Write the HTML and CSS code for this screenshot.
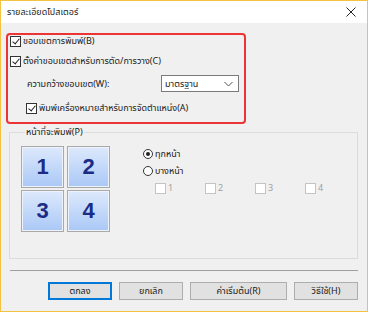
FILE: index.html
```html
<!DOCTYPE html>
<html lang="th">
<head>
  <meta charset="UTF-8">
  <title>รายละเอียดโปสเตอร์</title>
  <link rel="stylesheet" href="styles.css">
</head>
<body>

<div class="dialog">
  <!-- แถบชื่อหน้าต่าง -->
  <div class="titlebar">
    <span class="title">รายละเอียดโปสเตอร์</span>
    <svg class="close" width="10" height="10" viewBox="0 0 10 10">
      <path d="M0.5 0.5 L9.5 9.5 M9.5 0.5 L0.5 9.5" stroke="#222" stroke-width="1"/>
    </svg>
  </div>

  <div class="dialog-body">
    <!-- กรอบตัวเลือกขอบเขต -->
    <div class="highlight">
      <div class="opt row-margin">
        <span class="cb checked"></span>
        <span>ขอบเขตการพิมพ์(B)</span>
      </div>
      <div class="opt row-cut">
        <span class="cb checked"></span>
        <span>ตั้งค่าขอบเขตสำหรับการตัด/การวาง(C)</span>
      </div>
      <div class="opt row-width">
        <span class="width-label">ความกว้างขอบเขต(W):</span>
        <div class="select">
          <span>มาตรฐาน</span>
          <svg width="9" height="6" viewBox="0 0 9 6">
            <path d="M0.5 1 L4.5 5 L8.5 1" fill="none" stroke="#555" stroke-width="1"/>
          </svg>
        </div>
      </div>
      <div class="opt row-marks">
        <span class="cb checked"></span>
        <span>พิมพ์เครื่องหมายสำหรับการจัดตำแหน่ง(A)</span>
      </div>
    </div>

    <!-- หน้าที่จะพิมพ์ -->
    <fieldset class="group">
      <legend>หน้าที่จะพิมพ์(P)</legend>
      <div class="group-inner">
        <div class="tiles">
          <div class="tile">1</div>
          <div class="tile">2</div>
          <div class="tile">3</div>
          <div class="tile">4</div>
        </div>
        <div class="pages">
          <div class="opt radio-row">
            <span class="radio on"></span>
            <span>ทุกหน้า</span>
          </div>
          <div class="opt radio-row">
            <span class="radio"></span>
            <span>บางหน้า</span>
          </div>
          <div class="page-checks">
            <div class="opt page-check"><span class="cb disabled"></span><span>1</span></div>
            <div class="opt page-check"><span class="cb disabled"></span><span>2</span></div>
            <div class="opt page-check"><span class="cb disabled"></span><span>3</span></div>
            <div class="opt page-check"><span class="cb disabled"></span><span>4</span></div>
          </div>
        </div>
      </div>
    </fieldset>

    <div class="separator"></div>

    <div class="buttons">
      <button class="btn btn-default">ตกลง</button>
      <button class="btn">ยกเลิก</button>
      <button class="btn btn-wide">ค่าเริ่มต้น(R)</button>
      <button class="btn">วิธีใช้(H)</button>
    </div>
  </div>
</div>

</body>
</html>
```

FILE: styles.css
```css
body {
  margin: 0;
  background: #fff;
  font-family: "Noto Sans Thai", "Liberation Sans", sans-serif;
  font-size: 9px;
  color: #1a1a1a;
}

.dialog {
  width: 368px;
  height: 312px;
  box-sizing: border-box;
  border: 1px solid #f3c443;
  background: #f0f0f0;
  display: flex;
  flex-direction: column;
}

.titlebar {
  height: 22px;
  background: #fff;
  display: flex;
  align-items: center;
  justify-content: space-between;
  padding: 0 11px 0 6px;
  flex-shrink: 0;
}

.title { font-size: 9px; }

.dialog-body {
  padding: 10px 9px 0 5px;
}

/* กรอบสีแดง */
.highlight {
  width: 240px;
  box-sizing: border-box;
  border: 2px solid #ec3434;
  border-radius: 4px;
  padding: 0 0 8px 2px;
}

.opt {
  display: flex;
  align-items: center;
  white-space: nowrap;
}

.row-margin { height: 12px; }
.row-cut { height: 12px; margin-top: 8px; }
.row-width { height: 17px; margin-top: 8px; padding-left: 17px; }
.row-marks { height: 12px; margin-top: 10px; padding-left: 16px; }

.width-label { width: 134px; }

.select {
  width: 78px;
  height: 17px;
  box-sizing: border-box;
  border: 1px solid #7a7a7a;
  background: #fff;
  display: flex;
  align-items: center;
  justify-content: space-between;
  padding: 0 5px 0 3px;
}

.cb {
  width: 11px;
  height: 11px;
  box-sizing: border-box;
  border: 1px solid #333;
  background: #fff;
  margin-right: 2px;
  flex-shrink: 0;
  position: relative;
}

.cb.checked::after {
  content: '';
  position: absolute;
  left: 3px;
  top: 0px;
  width: 3px;
  height: 6px;
  border: solid #222;
  border-width: 0 1px 1px 0;
  transform: rotate(40deg);
}

.cb.disabled {
  border-color: #c4c4c4;
}

.radio {
  width: 10px;
  height: 10px;
  box-sizing: border-box;
  border: 1px solid #333;
  border-radius: 50%;
  background: #fff;
  margin-right: 2px;
  position: relative;
}

.radio.on::after {
  content: '';
  position: absolute;
  left: 2px;
  top: 2px;
  width: 4px;
  height: 4px;
  border-radius: 50%;
  background: #222;
}

/* กลุ่มหน้าที่จะพิมพ์ */
.group {
  margin: 1px 0 0 3px;
  width: 349px;
  height: 134px;
  box-sizing: border-box;
  border: 1px solid #dcdcdc;
  padding: 7px 0 0 11px;
}

.group legend {
  padding: 0 1px;
  margin-left: 4px;
  line-height: 14px;
}

.group-inner {
  display: flex;
}

.tiles {
  display: grid;
  grid-template-columns: 43px 43px;
  grid-auto-rows: 42px;
  column-gap: 3px;
  row-gap: 2px;
}

.tile {
  box-sizing: border-box;
  border: 1px solid #a9a9a9;
  box-shadow: inset 0 0 0 1px #eef3fb;
  background: linear-gradient(#dde9fc, #aac8f6);
  color: #1b2c86;
  font-family: "Liberation Sans", Arial, sans-serif;
  font-size: 22px;
  font-weight: bold;
  display: flex;
  align-items: center;
  justify-content: center;
}

.pages {
  margin-left: 33px;
  padding-top: 2px;
}

.radio-row { height: 12px; margin-top: 0; }
.radio-row + .radio-row { margin-top: 5px; }

.page-checks {
  display: flex;
  margin-top: 5px;
  padding-left: 12px;
}

.page-check {
  width: 50px;
  height: 12px;
  color: #a0a0a0;
}

.separator {
  margin: 11px 0 0 4px;
  width: 348px;
  border-top: 1px solid #a0a0a0;
}

.buttons {
  display: flex;
  justify-content: flex-end;
  margin-top: 11px;
}

.btn {
  width: 64px;
  height: 18px;
  box-sizing: border-box;
  background: #e1e1e1;
  border: 1px solid #adadad;
  font-family: inherit;
  font-size: 9px;
  color: #1a1a1a;
  padding: 0;
  margin-left: 7px;
}

.btn-default {
  border: 2px solid #0078d7;
}

.btn-wide { width: 97px; }
```
